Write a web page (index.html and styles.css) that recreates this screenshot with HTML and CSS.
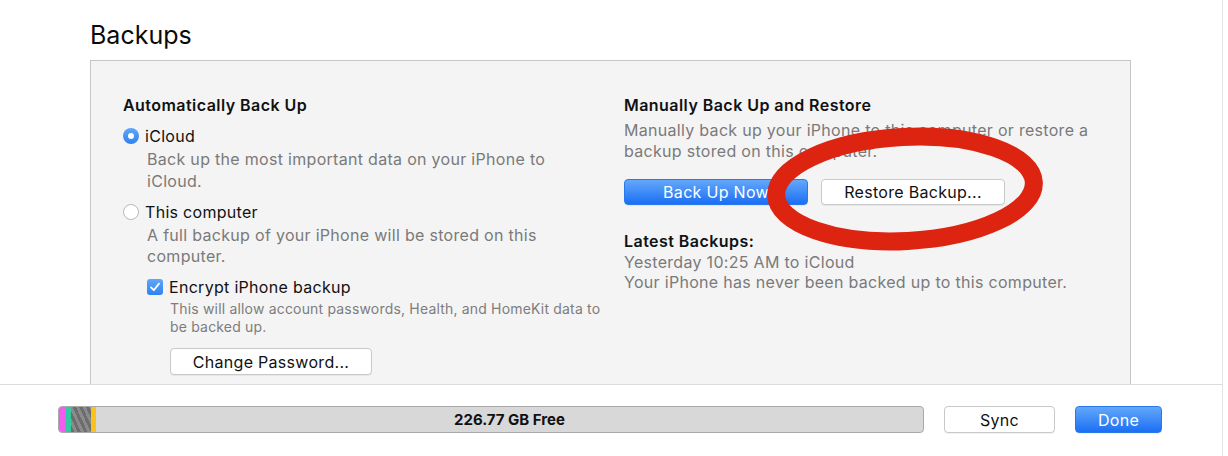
FILE: index.html
```html
<!DOCTYPE html>
<html lang="en">
<head>
<meta charset="utf-8">
<title>Backups</title>
<link rel="stylesheet" href="styles.css">
</head>
<body>
<div class="window">
  <main class="main">
    <h1 class="page-title">Backups</h1>
    <section class="panel">
      <div class="col col-left">
        <h2 class="sec-title">Automatically Back Up</h2>
        <div class="option">
          <span class="radio radio-on"></span>
          <span class="opt-label">iCloud</span>
        </div>
        <p class="desc desc-first">Back up the most important data on your iPhone to<br>iCloud.</p>
        <div class="option option-gap">
          <span class="radio"></span>
          <span class="opt-label">This computer</span>
        </div>
        <p class="desc desc-second">A full backup of your iPhone will be stored on this<br>computer.</p>
        <div class="option option-sub">
          <span class="checkbox">
            <svg viewBox="0 0 16 16" width="16" height="16"><path d="M4 8.4 L6.8 11.2 L12 4.6" fill="none" stroke="#fff" stroke-width="1.8" stroke-linecap="round" stroke-linejoin="round"/></svg>
          </span>
          <span class="opt-label">Encrypt iPhone backup</span>
        </div>
        <p class="small-desc">This will allow account passwords, Health, and HomeKit data to<br>be backed up.</p>
        <button class="btn btn-change">Change Password...</button>
      </div>
      <div class="col col-right">
        <h2 class="sec-title">Manually Back Up and Restore</h2>
        <p class="desc desc-right">Manually back up your iPhone to this computer or restore a<br>backup stored on this computer.</p>
        <div class="btn-row">
          <button class="btn btn-primary btn-wide">Back Up Now</button>
          <button class="btn btn-wide">Restore Backup...</button>
        </div>
        <h2 class="sec-title latest-title">Latest Backups:</h2>
        <p class="latest">Yesterday 10:25 AM to iCloud<br>Your iPhone has never been backed up to this computer.</p>
      </div>
      <svg class="annotation" viewBox="0 0 300 150" width="300" height="150">
        <ellipse cx="150" cy="75" rx="129" ry="52" fill="none" stroke="#dc2410" stroke-width="18" transform="rotate(-3 150 75)"/>
      </svg>
    </section>
  </main>
  <footer class="footer">
    <div class="storage">
      <span class="seg seg-pink"></span>
      <span class="seg seg-teal"></span>
      <span class="seg seg-gray"></span>
      <span class="seg seg-yellow"></span>
      <span class="seg-free">226.77 GB Free</span>
    </div>
    <button class="btn btn-sync">Sync</button>
    <button class="btn btn-primary btn-done">Done</button>
  </footer>
</div>
</body>
</html>
```

FILE: styles.css
```css
html, body {
  margin: 0;
  padding: 0;
  background: #ffffff;
}

body {
  font-family: Inter, "Noto Sans", "Liberation Sans", sans-serif;
  color: #111;
}

.window {
  width: 1222px;
  height: 456px;
  border-right: 1px solid #e3e3e3;
  display: flex;
  flex-direction: column;
  overflow: hidden;
}

.main {
  height: 384px;
  flex: none;
  overflow: hidden;
  padding-left: 90px;
  box-sizing: border-box;
}

.page-title {
  margin: 0;
  height: 60px;
  padding-top: 20px;
  box-sizing: border-box;
  font-size: 25px;
  line-height: 30px;
  font-weight: 400;
  color: #0a0a0a;
}

.panel {
  position: relative;
  width: 1041px;
  height: 360px;
  box-sizing: border-box;
  border: 1px solid #c6c6c6;
  background: #f4f4f4;
  padding: 34px 0 0 32px;
  display: grid;
  grid-template-columns: 501px 1fr;
  align-items: start;
}

.col {
  display: flex;
  flex-direction: column;
  align-items: flex-start;
}

.sec-title {
  margin: 0;
  font-size: 16px;
  line-height: 20px;
  font-weight: 600;
  letter-spacing: 0.45px;
  color: #111;
}

.option {
  display: flex;
  align-items: center;
  gap: 6px;
  height: 22px;
  margin-top: 10px;
}

.option-gap {
  margin-top: 9px;
}

.option-sub {
  margin-left: 24px;
  margin-top: 9px;
}

.opt-label {
  font-size: 16px;
  line-height: 22px;
  letter-spacing: 0.3px;
  color: #111;
}

.radio {
  width: 16px;
  height: 16px;
  box-sizing: border-box;
  border-radius: 50%;
  background: #fff;
  border: 1px solid #b8b8b8;
  position: relative;
  flex: none;
}

.radio-on {
  border: none;
  background: linear-gradient(#62a6f8, #2e82f1);
}

.radio-on::after {
  content: "";
  position: absolute;
  left: 5px;
  top: 5px;
  width: 6px;
  height: 6px;
  border-radius: 50%;
  background: #fff;
}

.checkbox {
  width: 16px;
  height: 16px;
  border-radius: 3px;
  background: linear-gradient(#62a6f8, #2e82f1);
  display: flex;
  flex: none;
}

.desc {
  margin: 0;
  font-size: 16px;
  line-height: 22px;
  letter-spacing: 0.3px;
  color: #7a7a7a;
  white-space: nowrap;
}

.desc-first {
  margin-left: 24px;
  margin-top: 1px;
}

.desc-second {
  margin-left: 24px;
  margin-top: 2px;
  line-height: 21px;
}

.small-desc {
  margin: 2px 0 0 47px;
  font-size: 14px;
  line-height: 18px;
  letter-spacing: 0.18px;
  color: #7d7d7d;
  white-space: nowrap;
}

.btn {
  font-family: inherit;
  font-size: 16px;
  letter-spacing: 0.3px;
  color: #111;
  background: #fff;
  border: 1px solid #c9c9c9;
  border-radius: 4px;
  height: 27px;
  padding: 0;
  box-sizing: border-box;
  box-shadow: 0 1px 0 rgba(0, 0, 0, 0.05);
}

.btn-primary {
  color: #fff;
  border: 1px solid #2a78ee;
  background: linear-gradient(#64a8fb, #1a6ff3);
}

.btn-change {
  margin: 12px 0 0 47px;
  width: 202px;
}

.desc-right {
  margin-top: 5px;
  line-height: 21px;
}

.btn-row {
  display: flex;
  gap: 13px;
  margin-top: 17px;
}

.btn-wide {
  width: 184px;
  height: 26px;
}

.latest-title {
  margin-top: 26px;
}

.latest {
  margin: 1px 0 0;
  font-size: 16px;
  line-height: 20px;
  letter-spacing: 0.3px;
  color: #7a7a7a;
  white-space: nowrap;
}

.annotation {
  position: absolute;
  left: 664px;
  top: 53px;
  pointer-events: none;
}

.footer {
  flex: 1;
  border-top: 1px solid #dcdcdc;
  display: flex;
  align-items: flex-start;
  padding: 21px 0 0 58px;
}

.storage {
  width: 866px;
  height: 27px;
  box-sizing: border-box;
  border: 1px solid #a9a9a9;
  border-radius: 4px;
  background: #d8d8d8;
  display: flex;
  overflow: hidden;
}

.seg {
  height: 100%;
  flex: none;
}

.seg-pink {
  width: 6px;
  background: #f25cf0;
}

.seg-teal {
  width: 6px;
  background: #33c9a1;
}

.seg-gray {
  width: 20px;
  background: repeating-linear-gradient(65deg, #6d6d6d 0 3px, #8b8b8b 3px 6px);
}

.seg-yellow {
  width: 5px;
  background: #fbc21c;
}

.seg-free {
  flex: 1;
  text-align: center;
  font-size: 15px;
  font-weight: 700;
  line-height: 25px;
  color: #111;
}

.btn-sync {
  margin-left: 20px;
  width: 111px;
}

.btn-done {
  margin-left: 20px;
  width: 87px;
}
```
